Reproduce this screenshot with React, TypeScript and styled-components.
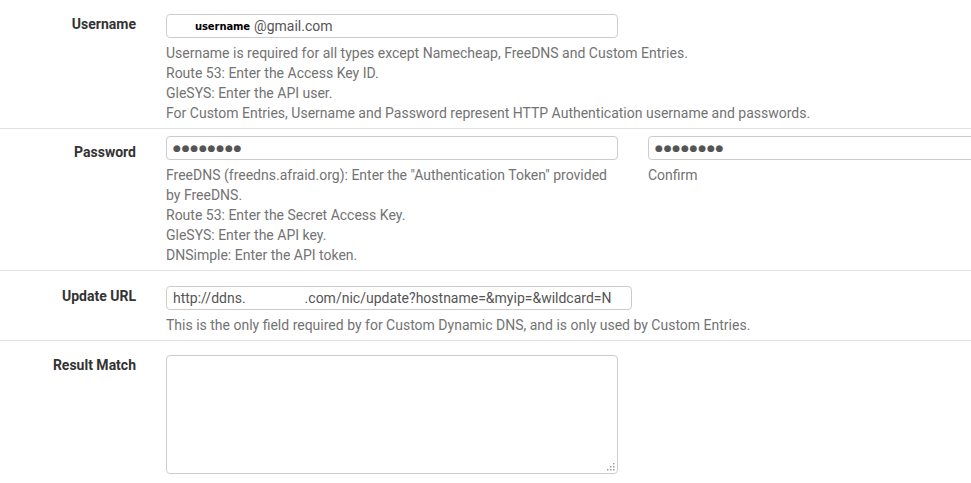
import React from 'react';
import styled, { createGlobalStyle } from 'styled-components';

const GlobalStyle = createGlobalStyle`
  html, body {
    margin: 0;
    padding: 0;
    background: #ffffff;
    font-family: Roboto, "Liberation Sans", Arial, sans-serif;
    font-size: 14px;
    color: #333;
  }
  * { box-sizing: border-box; }
`;

const Form = styled.div`
  width: 971px;
  height: 483px;
  overflow: hidden;
`;

const Row = styled.div<{ $top: number; $last?: boolean }>`
  display: grid;
  grid-template-columns: 136px 1fr;
  column-gap: 30px;
  padding: ${(p) => p.$top}px 0 5px 0;
  border-bottom: ${(p) => (p.$last ? 'none' : '1px solid #e2e2e2')};
`;

const Label = styled.div<{ $drop?: number }>`
  text-align: right;
  font-weight: 700;
  font-size: 14px;
  color: #333;
  line-height: 20px;
  padding-top: ${(p) => p.$drop ?? 0}px;
`;

const Field = styled.div`
  min-width: 0;
`;

const Split = styled.div`
  display: grid;
  grid-template-columns: 452px 1fr;
  column-gap: 30px;
`;

const inputLook = `
  display: block;
  height: 24px;
  padding: 0 6px;
  border: 1px solid #cccccc;
  border-radius: 4px;
  background: #fff;
  font-family: Roboto, "Liberation Sans", Arial, sans-serif;
  font-size: 14px;
  color: #555;
  line-height: 22px;
  outline: none;
`;

const TextInput = styled.input<{ $w?: number }>`
  ${inputLook}
  width: ${(p) => (p.$w ? `${p.$w}px` : '100%')};
`;

const FakeInput = styled.div<{ $w: number }>`
  ${inputLook}
  width: ${(p) => p.$w}px;
  white-space: pre;
  overflow: hidden;
`;

const Masked = styled.span`
  display: inline-block;
  width: 22px;
`;

const Redact = styled.span`
  font-family: Tahoma, "DejaVu Sans", sans-serif;
  font-weight: 700;
  font-size: 10px;
  color: #000;
  letter-spacing: -0.1px;
  margin-right: 4px;
  vertical-align: 1px;
`;

const Dots = styled.span`
  font-family: "DejaVu Sans", sans-serif;
  font-size: 9px;
  letter-spacing: 0.8px;
  color: #555;
  vertical-align: top;
`;

const Help = styled.div`
  margin-top: 5px;
  color: #737373;
  font-size: 14px;
  line-height: 20px;
`;

const AreaWrap = styled.div`
  position: relative;
  width: 452px;
`;

const TextArea = styled.textarea`
  display: block;
  width: 452px;
  height: 119px;
  border: 1px solid #cccccc;
  border-radius: 4px;
  resize: none;
  font-family: Roboto, "Liberation Sans", Arial, sans-serif;
  font-size: 14px;
  outline: none;
`;

const Grip = styled.svg`
  position: absolute;
  right: 3px;
  bottom: 3px;
  width: 8px;
  height: 8px;
`;

const Cut = styled.div`
  margin-top: 5px;
  color: #737373;
  line-height: 20px;
  white-space: nowrap;
`;

export default function App() {
  return (
    <Form>
      <GlobalStyle />
      <Row $top={14}>
        <Label>Username</Label>
        <Field>
          <FakeInput $w={452}>
            <Masked />
            <Redact>username</Redact>@gmail.com
          </FakeInput>
          <Help>
            Username is required for all types except Namecheap, FreeDNS and Custom Entries.
            <br />
            Route 53: Enter the Access Key ID.
            <br />
            GleSYS: Enter the API user.
            <br />
            For Custom Entries, Username and Password represent HTTP Authentication username and passwords.
          </Help>
        </Field>
      </Row>

      <Row $top={7}>
        <Label $drop={6}>Password</Label>
        <Split>
          <div>
            <FakeInput $w={452}>
              <Dots>●●●●●●●●</Dots>
            </FakeInput>
            <Help>
              FreeDNS (freedns.afraid.org): Enter the "Authentication Token" provided by FreeDNS.
              <br />
              Route 53: Enter the Secret Access Key.
              <br />
              GleSYS: Enter the API key.
              <br />
              DNSimple: Enter the API token.
            </Help>
          </div>
          <div>
            <FakeInput $w={340}>
              <Dots>●●●●●●●●</Dots>
            </FakeInput>
            <Help>Confirm</Help>
          </div>
        </Split>
      </Row>

      <Row $top={15}>
        <Label>Update URL</Label>
        <Field>
          <TextInput
            $w={466}
            readOnly
            value={'http://ddns.                 .com/nic/update?hostname=&myip=&wildcard=N'}
          />
          <Help>
            This is the only field required by for Custom Dynamic DNS, and is only used by Custom Entries.
          </Help>
        </Field>
      </Row>

      <Row $top={14} $last>
        <Label>Result Match</Label>
        <Field>
          <AreaWrap>
            <TextArea />
            <Grip viewBox="0 0 8 8">
              <g fill="#9a9a9a">
                <rect x="6" y="0" width="1.5" height="1.5" />
                <rect x="3" y="3" width="1.5" height="1.5" />
                <rect x="6" y="3" width="1.5" height="1.5" />
                <rect x="0" y="6" width="1.5" height="1.5" />
                <rect x="3" y="6" width="1.5" height="1.5" />
                <rect x="6" y="6" width="1.5" height="1.5" />
              </g>
            </Grip>
          </AreaWrap>
          <Cut>
            This field should be the exact text that the server returns when it successfully updates the record, and is only used by Custom Entries.
          </Cut>
        </Field>
      </Row>
    </Form>
  );
}
